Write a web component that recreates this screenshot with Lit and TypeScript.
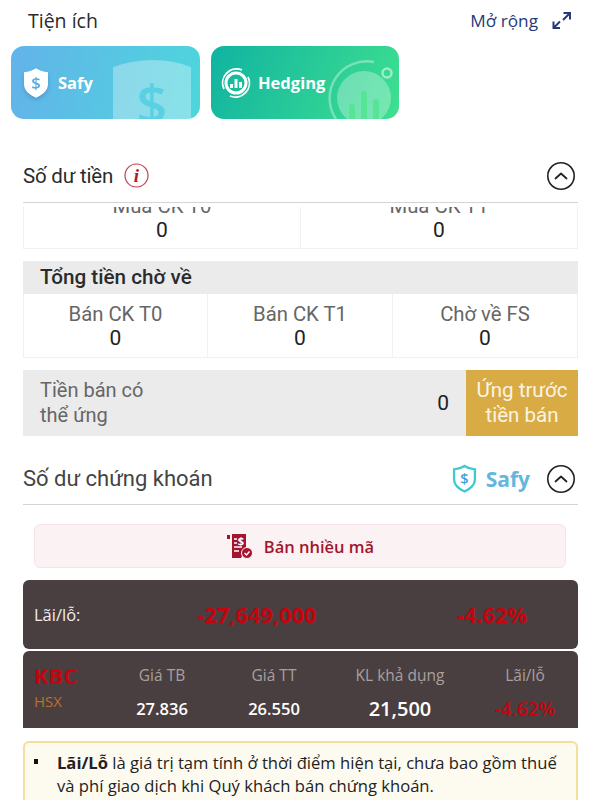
import { LitElement, html, css, svg } from 'lit';
import { customElement } from 'lit/decorators.js';

const chevronCircle = html`
  <svg class="chev" width="30" height="30" viewBox="0 0 30 30" fill="none" stroke="#222">
    <circle cx="15" cy="15" r="13.2" stroke-width="1.6"></circle>
    <path d="M9.5 17.5 15 12.5l5.5 5" stroke-width="1.8" stroke-linecap="round" stroke-linejoin="round"></path>
  </svg>`;

const shieldPath = 'M12 1.5C15 3.500 18.500 4.500 22 4.800v9.700c0 5.500-4.500 9-10 11.500C6.500 23.500 2 20 2 14.500V4.800C5.500 4.500 9 3.500 12 1.500z';

@customElement('app-root')
export class AppRoot extends LitElement {
  static styles = css`
    :host {
      display: block;
      width: 600px;
      height: 800px;
      overflow: hidden;
      background: #fff;
      font-family: "Open Sans", "Liberation Sans", sans-serif;
      color: #222;
    }
    .top { display: flex; justify-content: space-between; align-items: center; height: 41px; padding: 0 28px; }
    .top h2 { margin: 0; font-size: 19.500px; font-weight: 400; color: #2b2b2b; }
    .expand { display: flex; align-items: center; gap: 13px; color: #263a78; font-size: 17.200px; }
    .tiles { display: flex; gap: 11px; padding: 5px 0 0 11px; }
    .tile {
      position: relative;
      overflow: hidden;
      width: 189px;
      height: 73px;
      border-radius: 13px;
      display: flex;
      align-items: center;
      color: #fff;
      font-size: 16.500px;
      font-weight: 700;
    }
    .tile span { position: relative; }
    .tile .deco { position: absolute; left: 0; top: 0; }
    .tile .mark { position: relative; }
    .safy { background: linear-gradient(100deg, #63b3ea, #4dd6dc); padding-left: 13px; gap: 10px; box-sizing: border-box; }
    .safy .mark { filter: drop-shadow(0 2px 2px rgba(40, 90, 150, 0.35)); }
    .hedging { background: linear-gradient(115deg, #10b3a1, #3fe08f); padding-left: 10px; gap: 7px; box-sizing: border-box; width: 188px; }
    .head {
      display: flex;
      align-items: center;
      margin: 0 22px 0 23px;
      border-bottom: 1.500px solid #d4d4d4;
      font-family: Roboto, "Liberation Sans", sans-serif;
    }
    .head h3 { margin: 0; font-weight: 400; color: #2b2b2b; }
    .head .chev { margin-right: 2px; }
    .money { height: 45px; margin-top: 39px; gap: 11px; box-sizing: border-box; padding-bottom: 9px; }
    .money h3 { font-size: 20.500px; letter-spacing: -0.2px; }
    .money .chev { margin-left: auto; }
    .body { margin: 0 22px 0 23px; font-family: Roboto, "Liberation Sans", sans-serif; }
    /* the list is scrolled under the header: only the bottom of the first labels shows */
    .clip { height: 46px; overflow: hidden; clip-path: inset(4px 0 0 0); }
    .cols {
      display: grid;
      height: 64px;
      box-sizing: border-box;
      border: 1px solid #f1f1f1;
      text-align: center;
    }
    .cols.two { grid-template-columns: 276px 1fr; margin-top: -18px; }
    .cols.three { grid-template-columns: 183px 185px 1fr; border-top: 0; }
    .cell { border-left: 1px solid #f1f1f1; padding-top: 8px; }
    .cell:first-child { border-left: 0; }
    .cell label { display: block; font-size: 20.300px; line-height: 24px; color: #666; }
    .cell b { display: block; font-size: 21px; font-weight: 400; line-height: 24px; color: #222; }
    .subtitle {
      margin-top: 12px;
      height: 33px;
      line-height: 33px;
      padding-left: 17px;
      background: #ebebeb;
      font-size: 20.700px;
      font-weight: 500;
      color: #2b2b2b;
    }
    .advance { display: flex; align-items: center; height: 66px; margin-top: 12px; background: #ebebeb; }
    .advance p { margin: 0; padding-left: 17px; width: 120px; font-size: 20px; line-height: 25px; color: #666; flex: none; }
    .advance b { margin-left: auto; padding-right: 17px; font-size: 21px; font-weight: 400; }
    .advance button {
      width: 112px;
      height: 100%;
      border: 0;
      padding: 0;
      background: #d9ab45;
      color: #fbf4e2;
      font: 400 20.500px/25px Roboto, "Liberation Sans", sans-serif;
    }
    .stock { height: 43px; margin-top: 26px; box-sizing: border-box; padding-bottom: 9px; justify-content: space-between; }
    .stock h3 { font-size: 22px; color: #444; }
    .safy-tag { display: flex; align-items: center; gap: 9px; margin-left: auto; color: #62b7df; font: 700 21px "Open Sans", sans-serif; }
    .stock .chev { margin-left: 16px; }
    .sell {
      display: flex;
      align-items: center;
      justify-content: center;
      gap: 10px;
      height: 44px;
      margin: 19px 34px 0;
      box-sizing: border-box;
      border: 1px solid #f9e3e7;
      border-radius: 6px;
      background: #fbf2f4;
      color: #a5142f;
      font-size: 16.500px;
      font-weight: 600;
    }
    .dark { margin: 0 22px 0 23px; background: #4a3f40; border-radius: 6px; color: #fff; }
    .total {
      display: grid;
      grid-template-columns: 11px 122px 202px 1fr;
      align-items: center;
      height: 69px;
      margin-top: 12px;
      font-size: 16.500px;
    }
    .total span { grid-column: 2; color: #eee; }
    .total b { color: #c4040f; font-size: 21.800px; font-weight: 700; text-align: center; }
    .total b.pct { text-align: left; padding-left: 99px; }
    .stockrow {
      display: grid;
      grid-template-columns: 66px 124px 100px 152px 98px;
      padding-left: 11px;
      margin-top: 2px;
      height: 77px;
      box-sizing: border-box;
      padding-top: 9px;
      border-radius: 6px 6px 0 0;
      text-align: center;
    }
    .code { text-align: left; }
    .code b { display: block; color: #c4040f; font-size: 22px; font-weight: 700; line-height: 30px; }
    .code i { display: block; color: #b8702e; font-style: normal; font-size: 15px; line-height: 23px; }
    .stat label { display: block; color: #a99f9f; font-size: 15.500px; line-height: 30px; }
    .stat b { display: block; font-size: 16.500px; font-weight: 600; line-height: 30px; margin-top: 4px; }
    .stat b.big { font-size: 20px; }
    .stat b.red { color: #c4040f; font-size: 19px; }
    .note {
      margin: 13px 22px 0 23px;
      height: 80px;
      box-sizing: border-box;
      border: 2px solid #f3e09c;
      border-radius: 6px;
      background: #fdfaf0;
      padding: 8px 10px 0 32px;
      font-size: 16.600px;
      line-height: 23px;
      color: #222;
    }
    .note ul { margin: 0; padding: 0; list-style: none; }
    .note li { position: relative; }
    .note li::before {
      content: "";
      position: absolute;
      left: -23px;
      top: 8px;
      width: 4px;
      height: 5px;
      background: #111;
    }
    .note b { font-weight: 700; }
  `;

  private _safyDeco() {
    return svg`
      <path d="M102 21Q122 14 142 14T180 21V73H102Z" fill="#fff" fill-opacity=".32"></path>
      <text x="141" y="78" text-anchor="middle" font-family="Open Sans" font-weight="600" font-size="54" fill="#5ad0e2">$</text>
    `;
  }

  private _hedgingDeco() {
    return svg`
      <circle cx="153" cy="52" r="27" fill="#fff" fill-opacity=".3"></circle>
      <path d="M125 73A37 37 0 0 1 163 16" fill="none" stroke="#fff" stroke-opacity=".35" stroke-width="2.500"></path>
      <circle cx="176" cy="27" r="4.500" fill="none" stroke="#fff" stroke-opacity=".5" stroke-width="2.500"></circle>
      <path d="M141 73V61M153 73V48M165 73V56" stroke="#56e596" stroke-width="6" stroke-linecap="round"></path>
    `;
  }

  render() {
    return html`
      <div class="top">
        <h2>Tiện ích</h2>
        <div class="expand">
          <span>Mở rộng</span>
          <svg width="21" height="21" viewBox="0 0 21 21" fill="none" stroke="#263a78" stroke-width="2">
            <path d="M12.500 3H19V9.500M19 3 12 10M2.500 11.500V18H9M2.500 18 9 11.500"></path>
          </svg>
        </div>
      </div>

      <div class="tiles">
        <div class="tile safy">
          <svg class="deco" width="189" height="73">${this._safyDeco()}</svg>
          <svg class="mark" width="24" height="30" viewBox="2 1.500 20 24.500">
            <path d=${shieldPath} fill="#fff"></path>
            <text x="12" y="18.500" text-anchor="middle" font-family="Open Sans" font-size="14" font-weight="600" fill="#5aa9e0">$</text>
          </svg>
          <span>Safy</span>
        </div>
        <div class="tile hedging">
          <svg class="deco" width="188" height="73">${this._hedgingDeco()}</svg>
          <svg class="mark" width="30" height="32" viewBox="0 0 30 32" fill="none" stroke="#fff">
            <circle cx="15" cy="16" r="10" stroke-width="3"></circle>
            <path d="M3 22A14 14 0 0 1 21 3M27 10A14 14 0 0 1 9 29" stroke-width="1.800"></path>
            <path d="M10.500 21V17M15 21V12M19.500 21V15" stroke-width="3"></path>
          </svg>
          <span>Hedging</span>
        </div>
      </div>

      <div class="head money">
        <h3>Số dư tiền</h3>
        <svg width="25" height="25" viewBox="0 0 25 25" fill="none">
          <circle cx="12.500" cy="12.500" r="11.500" stroke="#c9404f" stroke-width="1.200"></circle>
          <text x="12.500" y="19" text-anchor="middle" font-family="Liberation Serif" font-style="italic" font-weight="700" font-size="19" fill="#b01a2c">i</text>
        </svg>
        ${chevronCircle}
      </div>

      <div class="body">
        <div class="clip">
          <div class="cols two">
            <div class="cell"><label>Mua CK T0</label><b>0</b></div>
            <div class="cell"><label>Mua CK T1</label><b>0</b></div>
          </div>
        </div>
        <div class="subtitle">Tổng tiền chờ về</div>
        <div class="cols three">
          <div class="cell"><label>Bán CK T0</label><b>0</b></div>
          <div class="cell"><label>Bán CK T1</label><b>0</b></div>
          <div class="cell"><label>Chờ về FS</label><b>0</b></div>
        </div>
        <div class="advance">
          <p>Tiền bán có thể ứng</p>
          <b>0</b>
          <button>Ứng trước<br />tiền bán</button>
        </div>
      </div>

      <div class="head stock">
        <h3>Số dư chứng khoán</h3>
        <div class="safy-tag">
          <svg width="25" height="30" viewBox="0 0 24 28" fill="none">
            <path d=${shieldPath} stroke="#3cc9d2" stroke-width="2.200"></path>
            <text x="12" y="19" text-anchor="middle" font-family="Open Sans" font-size="14" font-weight="600" fill="#3b9fdc">$</text>
          </svg>
          <span>Safy</span>
        </div>
        ${chevronCircle}
      </div>

      <div class="sell">
        <svg width="28" height="26" viewBox="0 0 28 26">
          <path d="M1 2h3v4H1z" fill="#a5142f"></path>
          <path d="M6 1h14v15l-5 9H6z" fill="#a5142f"></path>
          <text x="15" y="12" text-anchor="middle" font-family="Open Sans" font-size="11" font-weight="700" fill="#fff">$</text>
          <path d="M8 6h3M8 10h3M8 14h8M8 18h5" stroke="#fff" stroke-width="1.500"></path>
          <circle cx="21" cy="20" r="5.500" fill="#a5142f" stroke="#fbf2f4"></circle>
          <path d="M18.500 20l2 2 3-3.500" fill="none" stroke="#fff" stroke-width="1.500"></path>
        </svg>
        <span>Bán nhiều mã</span>
      </div>

      <div class="dark total">
        <span>Lãi/lỗ:</span>
        <b>-27,649,000</b>
        <b class="pct">-4.62%</b>
      </div>

      <div class="dark stockrow">
        <div class="code"><b>KBC</b><i>HSX</i></div>
        <div class="stat"><label>Giá TB</label><b>27.836</b></div>
        <div class="stat"><label>Giá TT</label><b>26.550</b></div>
        <div class="stat"><label>KL khả dụng</label><b class="big">21,500</b></div>
        <div class="stat"><label>Lãi/lỗ</label><b class="red">-4.62%</b></div>
      </div>

      <div class="note">
        <ul>
          <li><b>Lãi/Lỗ</b> là giá trị tạm tính ở thời điểm hiện tại, chưa bao gồm thuế và phí giao dịch khi Quý khách bán chứng khoán.</li>
        </ul>
      </div>
    `;
  }
}

declare global {
  interface HTMLElementTagNameMap {
    'app-root': AppRoot;
  }
}
